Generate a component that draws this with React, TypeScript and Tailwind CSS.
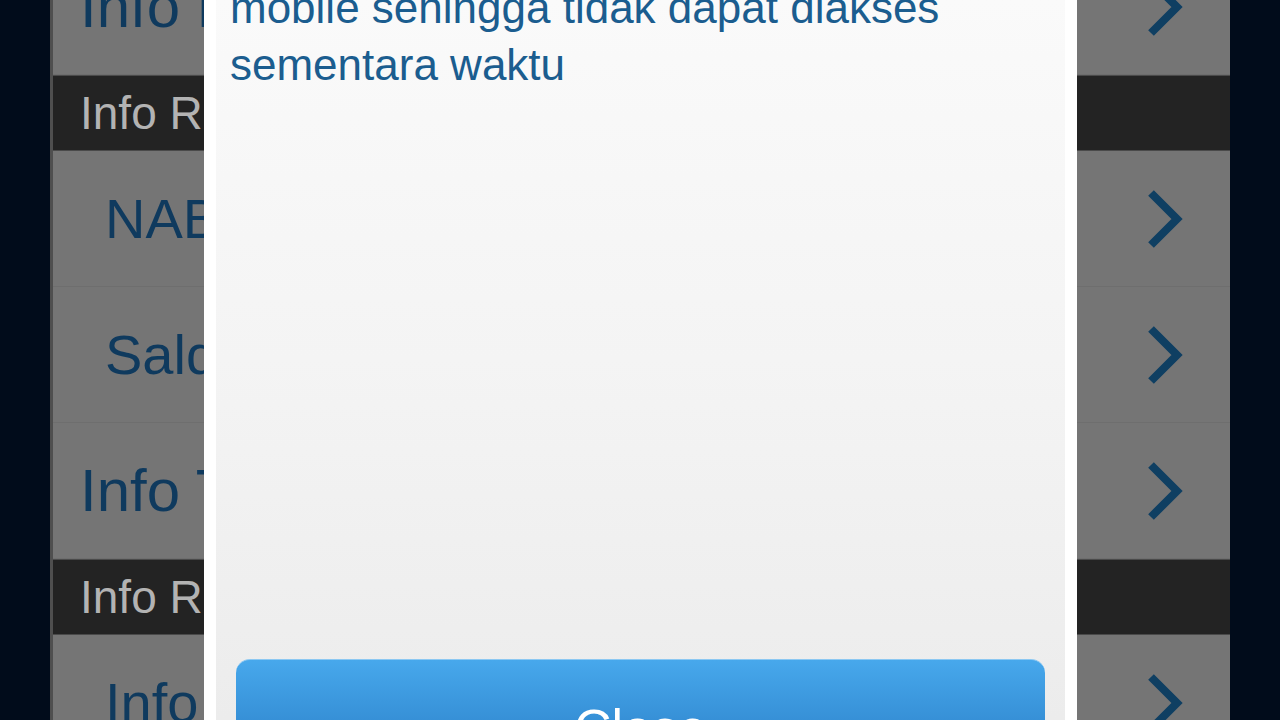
import { ReactNode } from 'react';

const font = { fontFamily: '"Liberation Sans", Arial, sans-serif' };

export default function App() {
  return (
    <div className="relative h-[720px] w-[1280px] overflow-hidden bg-[#010c1b]" style={font}>
      <div className="mx-[50px] border-l-[3px] border-[#4f4f4f] bg-[#757575]">
        <div className="-mt-[61px] flex flex-col">
          <Row indent="pl-[27px]">Info Produk</Row>
          <Header>Info Reksa Dana</Header>
          <Row indent="pl-[52px]" size="text-[56px]">NAB Reksa Dana</Row>
          <Row indent="pl-[52px]" size="text-[56px]">Saldo Reksa Dana</Row>
          <Row indent="pl-[27px]">Info Transaksi</Row>
          <Header>Info Rekening</Header>
          <Row indent="pl-[52px]" size="text-[56px]">Info Saldo</Row>
        </div>
      </div>

      <div className="absolute left-[204px] top-0 h-full w-[873px] overflow-hidden border-x-[12px] border-white bg-gradient-to-b from-[#fafafa] via-[#f4f4f4] to-[#ececec]">
        <div className="flex flex-col px-[14px]">
          <p className="-mt-[21px] text-[44px] leading-[57px] text-[#1b5d8f]">
            mobile sehingga tidak dapat diakses
            <br />
            sementara waktu
          </p>
          <button className="mt-[566px] ml-[6px] flex h-[136px] w-[809px] items-center justify-center rounded-[14px] border-t border-[#8cc8f2] bg-gradient-to-b from-[#47a8ec] to-[#2273bd] text-[52px] text-white">
            Close
          </button>
        </div>
      </div>
    </div>
  );
}

function Row(props: { children: ReactNode; indent: string; size?: string }) {
  return (
    <div className="flex h-[136px] items-center justify-between border-b border-[#6e6e6e]">
      <div className={`w-[151px] overflow-hidden whitespace-nowrap ${props.indent} ${props.size ?? 'text-[60px]'} text-[#0f3a5e]`}>
        {props.children}
      </div>
      <svg width="40" height="60" viewBox="0 0 40 60" className="mr-[45px]" aria-hidden="true">
        <polyline points="6,4 32,30 6,56" fill="none" stroke="#0f3f62" strokeWidth="8" />
      </svg>
    </div>
  );
}

function Header(props: { children: ReactNode }) {
  return (
    <div className="flex h-[76px] items-center border-y border-[#4a4a4a] bg-[#232323]">
      <div className="w-[151px] overflow-hidden whitespace-nowrap pl-[27px] text-[46px] text-[#b3b3b3]">
        {props.children}
      </div>
    </div>
  );
}
